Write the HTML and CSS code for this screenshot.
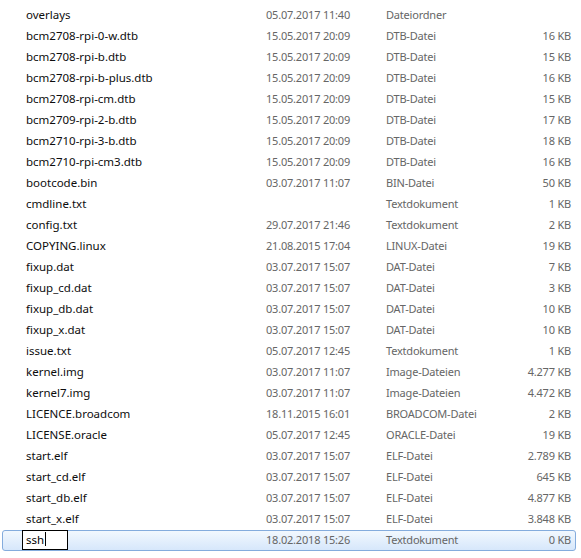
FILE: index.html
```html
<!DOCTYPE html>
<html lang="de">
<head>
<meta charset="utf-8">
<link rel="stylesheet" href="styles.css">
</head>
<body>
<div class="list">
  <div class="row"><span class="name">overlays</span><span class="date">05.07.2017 11:40</span><span class="type">Dateiordner</span><span class="size"></span></div>
  <div class="row"><span class="name">bcm2708-rpi-0-w.dtb</span><span class="date">15.05.2017 20:09</span><span class="type">DTB-Datei</span><span class="size">16 KB</span></div>
  <div class="row"><span class="name">bcm2708-rpi-b.dtb</span><span class="date">15.05.2017 20:09</span><span class="type">DTB-Datei</span><span class="size">15 KB</span></div>
  <div class="row"><span class="name">bcm2708-rpi-b-plus.dtb</span><span class="date">15.05.2017 20:09</span><span class="type">DTB-Datei</span><span class="size">16 KB</span></div>
  <div class="row"><span class="name">bcm2708-rpi-cm.dtb</span><span class="date">15.05.2017 20:09</span><span class="type">DTB-Datei</span><span class="size">15 KB</span></div>
  <div class="row"><span class="name">bcm2709-rpi-2-b.dtb</span><span class="date">15.05.2017 20:09</span><span class="type">DTB-Datei</span><span class="size">17 KB</span></div>
  <div class="row"><span class="name">bcm2710-rpi-3-b.dtb</span><span class="date">15.05.2017 20:09</span><span class="type">DTB-Datei</span><span class="size">18 KB</span></div>
  <div class="row"><span class="name">bcm2710-rpi-cm3.dtb</span><span class="date">15.05.2017 20:09</span><span class="type">DTB-Datei</span><span class="size">16 KB</span></div>
  <div class="row"><span class="name">bootcode.bin</span><span class="date">03.07.2017 11:07</span><span class="type">BIN-Datei</span><span class="size">50 KB</span></div>
  <div class="row"><span class="name">cmdline.txt</span><span class="date"></span><span class="type">Textdokument</span><span class="size">1 KB</span></div>
  <div class="row"><span class="name">config.txt</span><span class="date">29.07.2017 21:46</span><span class="type">Textdokument</span><span class="size">2 KB</span></div>
  <div class="row"><span class="name">COPYING.linux</span><span class="date">21.08.2015 17:04</span><span class="type">LINUX-Datei</span><span class="size">19 KB</span></div>
  <div class="row"><span class="name">fixup.dat</span><span class="date">03.07.2017 15:07</span><span class="type">DAT-Datei</span><span class="size">7 KB</span></div>
  <div class="row"><span class="name">fixup_cd.dat</span><span class="date">03.07.2017 15:07</span><span class="type">DAT-Datei</span><span class="size">3 KB</span></div>
  <div class="row"><span class="name">fixup_db.dat</span><span class="date">03.07.2017 15:07</span><span class="type">DAT-Datei</span><span class="size">10 KB</span></div>
  <div class="row"><span class="name">fixup_x.dat</span><span class="date">03.07.2017 15:07</span><span class="type">DAT-Datei</span><span class="size">10 KB</span></div>
  <div class="row"><span class="name">issue.txt</span><span class="date">05.07.2017 12:45</span><span class="type">Textdokument</span><span class="size">1 KB</span></div>
  <div class="row"><span class="name">kernel.img</span><span class="date">03.07.2017 11:07</span><span class="type">Image-Dateien</span><span class="size">4.277 KB</span></div>
  <div class="row"><span class="name">kernel7.img</span><span class="date">03.07.2017 11:07</span><span class="type">Image-Dateien</span><span class="size">4.472 KB</span></div>
  <div class="row"><span class="name">LICENCE.broadcom</span><span class="date">18.11.2015 16:01</span><span class="type">BROADCOM-Datei</span><span class="size">2 KB</span></div>
  <div class="row"><span class="name">LICENSE.oracle</span><span class="date">05.07.2017 12:45</span><span class="type">ORACLE-Datei</span><span class="size">19 KB</span></div>
  <div class="row"><span class="name">start.elf</span><span class="date">03.07.2017 15:07</span><span class="type">ELF-Datei</span><span class="size">2.789 KB</span></div>
  <div class="row"><span class="name">start_cd.elf</span><span class="date">03.07.2017 15:07</span><span class="type">ELF-Datei</span><span class="size">645 KB</span></div>
  <div class="row"><span class="name">start_db.elf</span><span class="date">03.07.2017 15:07</span><span class="type">ELF-Datei</span><span class="size">4.877 KB</span></div>
  <div class="row"><span class="name">start_x.elf</span><span class="date">03.07.2017 15:07</span><span class="type">ELF-Datei</span><span class="size">3.848 KB</span></div>
  <div class="row selected"><span class="name"><span class="rename">ssh<span class="caret"></span></span></span><span class="date">18.02.2018 15:26</span><span class="type">Textdokument</span><span class="size">0 KB</span></div>
</div>
</body>
</html>
```
FILE: styles.css
```css
html, body {
  margin: 0;
  padding: 0;
  background: #ffffff;
}
body {
  font-family: "Noto Sans", "DejaVu Sans", sans-serif;
  font-size: 11.5px;
}
.list {
  padding-top: 5px;
  padding-left: 2px;
  width: 574px;
}
.row {
  display: grid;
  grid-template-columns: 240px 120px 1fr 80px;
  height: 21px;
  padding-left: 23px;
  padding-right: 4px;
  box-sizing: border-box;
  border: 1px solid transparent;
  border-radius: 3px;
  white-space: nowrap;
}
.row > span {
  display: block;
  height: 19px;
  line-height: 18px;
}
.name {
  color: #0d0d0d;
}
.date, .type, .size {
  color: #666666;
  font-size: 11px;
  letter-spacing: -0.2px;
}
.size {
  text-align: right;
}
.selected {
  border-color: #84acdd;
  background: linear-gradient(to bottom, #f2f8fe, #d6e7fb);
}
.rename {
  display: inline-block;
  box-sizing: border-box;
  margin-left: -4px;
  margin-top: -1px;
  width: 46px;
  height: 20px;
  line-height: 17px;
  padding-left: 3px;
  border: 1px solid #000000;
  background: #ffffff;
  color: #000000;
  vertical-align: top;
}
.caret {
  display: inline-block;
  width: 1px;
  height: 14px;
  background: #000000;
  vertical-align: -2px;
  margin-left: 1px;
}
```
